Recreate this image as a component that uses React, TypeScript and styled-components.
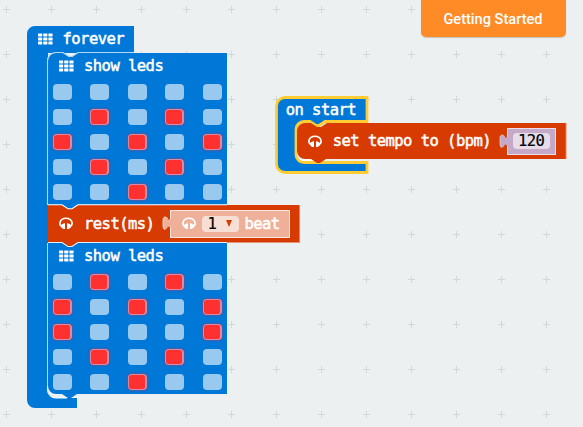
import React from "react";
import styled, { createGlobalStyle } from "styled-components";

const BLUE = "#0078d7";
const RED = "#d83b01";
const CANVAS = "#ecf0f1";
const YELLOW = "#fc3";

const GlobalStyle = createGlobalStyle`
  body { margin: 0; background: ${CANVAS}; }
  * { box-sizing: border-box; }
`;

const Workspace = styled.main`
  position: relative;
  width: 583px;
  height: 427px;
  overflow: hidden;
  background: ${CANVAS};
`;

const GridLayer = styled.svg`
  position: absolute;
  inset: 0;
`;

const Stack = styled.section<{ $x: number; $y: number }>`
  position: absolute;
  left: ${(p) => p.$x}px;
  top: ${(p) => p.$y}px;
`;

const Block = styled.div<{ $w: number; $h: number }>`
  position: relative;
  width: ${(p) => p.$w}px;
  height: ${(p) => p.$h}px;
`;

const Silhouette = styled.svg`
  position: absolute;
  inset: 0;
  width: 100%;
  height: 100%;
  overflow: visible;
`;

const Row = styled.div<{ $h: number; $pad: number; $top?: number }>`
  position: relative;
  display: flex;
  align-items: center;
  height: ${(p) => p.$h}px;
  padding-left: ${(p) => p.$pad}px;
  padding-top: ${(p) => p.$top ?? 0}px;
  gap: 10px;
`;

const Label = styled.span<{ $dark?: boolean }>`
  font: 15.5px/18px "DejaVu Sans Mono", monospace;
  letter-spacing: -0.53px;
  color: ${(p) => (p.$dark ? "#000" : "#fff")};
  -webkit-text-stroke: ${(p) => (p.$dark ? "0.2px #000" : "0.5px #fff")};
  white-space: pre;
`;

const Statements = styled.div<{ $indent: number; $top?: number }>`
  position: relative;
  margin-left: ${(p) => p.$indent}px;
  padding-top: ${(p) => p.$top ?? 0}px;
`;

const LedGrid = styled.div`
  position: relative;
  display: grid;
  grid-template-columns: repeat(5, 19px);
  grid-auto-rows: 16px;
  gap: 9px 18.5px;
  padding: 5px 0 0 4.8px;
`;

const Led = styled.i<{ $on: boolean }>`
  border-radius: 4px;
  background: ${(p) => (p.$on ? "#ff3030" : "#99c9ef")};
  border: ${(p) => (p.$on ? "1px solid #d78ca6" : "0")};
  border-right-width: ${(p) => (p.$on ? "2px" : "0")};
  box-shadow: ${(p) => (p.$on ? "0 0 3px #a03a70" : "none")};
`;

const ValueBlock = styled.div<{ $w: number; $h: number; $fill: string; $edge: string; $gap: number; $offset: number; $pad: number }>`
  position: relative;
  display: flex;
  align-items: center;
  gap: ${(p) => p.$gap}px;
  width: ${(p) => p.$w}px;
  height: ${(p) => p.$h}px;
  margin-left: ${(p) => p.$offset}px;
  padding-left: ${(p) => p.$pad}px;
  background: ${(p) => p.$fill};
  border: 1px solid ${(p) => p.$edge};
`;

const Tab = styled.svg`
  position: absolute;
  left: -9px;
  top: 4px;
`;

const Field = styled.div<{ $w: number; $fill: string; $left?: number }>`
  display: flex;
  align-items: center;
  justify-content: ${(p) => (p.$left ? "flex-start" : "center")};
  padding-left: ${(p) => p.$left ?? 0}px;
  gap: 10px;
  width: ${(p) => p.$w}px;
  height: 16px;
  border-radius: 4px;
  background: ${(p) => p.$fill};
`;

const GettingStarted = styled.button`
  position: absolute;
  left: 421px;
  top: 0;
  width: 145px;
  height: 37px;
  padding: 0 1px 0 0;
  border: 0;
  border-radius: 0 0 5px 5px;
  background: #ff8b27;
  box-shadow: 0 1px 1px #c9c4bf;
  color: #fff;
  font: 500 14.6px/38px Roboto, sans-serif;
`;

const GridIcon = () => (
  <svg width="15" height="12" viewBox="0 0 15 12" fill="#fff">
    {[0.4, 4.4, 8.4].map((y) =>
      [0, 5.2, 10.4].map((x) => <rect key={`${x}-${y}`} x={x} y={y} width="4.2" height="3" rx=".4" />),
    )}
  </svg>
);

const Headphones = () => (
  <svg width="15" height="13" viewBox="0 0 15 13">
    <path d="M1.9 9C.2 6.6.9 3.8 3 2.4C5.2.9 8.8.9 11 2.4C13.1 3.8 13.8 6.6 12.1 9" fill="none" stroke="#fff" strokeWidth="1.7" />
    <path d="M6 6.2V12.1C3.6 12 2.2 10.9 1.5 8.9C2.6 7.2 4 6.2 6 6.2ZM8 6.2V12.1C10.4 12 11.8 10.9 12.5 8.9C11.4 7.2 10 6.2 8 6.2Z" fill="#fff" />
  </svg>
);

const Connector = ({ fill, edge }: { fill: string; edge: string }) => (
  <Tab width="10" height="16" viewBox="0 0 10 16">
    <path d="M10 3L6 5Q5 1.5 2.5 2Q1 2.5 1 5V11Q1 14.5 3 14.5Q5 14 6 11.5L10 13Z" fill={fill} />
    <path d="M6 4.5Q5 1.5 2.5 2Q1 2.5 1 5V11Q1 14.5 3 14.5" fill="none" stroke={edge} strokeWidth=".8" />
  </Tab>
);

const ShowLeds = ({ pattern, first }: { pattern: string[]; first?: boolean }) => (
  <Block $w={179} $h={first ? 152 : 151}>
    <Silhouette>
      {first ? (
        <>
          <path d="M0 152V8A8 8 0 0 1 8 0H15L21 4H24L30 0H179V152Z" fill={BLUE} />
          <path d="M-.5 152V8A8 8 0 0 1 7.5-.5H15L21 3.5H24L30-.5H86" fill="none" stroke="#b5d9f4" strokeWidth="1.1" />
        </>
      ) : (
        <>
          <path d="M0 0H179V151H29L23 155H20L14 151H8A8 8 0 0 1 0 143Z" fill={BLUE} />
          <path d="M14-1L20 3H24L30-1Z" fill={RED} />
          <path d="M0-.5H14L20 3.5H24L30-.5H179" fill="none" stroke="#e3effa" strokeWidth="1.1" />
          <path d="M-.5 0V143" fill="none" stroke="#b5d9f4" />
        </>
      )}
    </Silhouette>
    <Row $h={26} $pad={11}>
      <GridIcon />
      <Label>show leds</Label>
    </Row>
    <LedGrid>
      {pattern.join("").split("").map((c, i) => (
        <Led key={i} $on={c === "#"} />
      ))}
    </LedGrid>
  </Block>
);

const C_SHAPE = "M10 1.5H92V25.5H50L44 29.5H41L35 25.5H29A8 8 0 0 0 21 33.5V58.5A8 8 0 0 0 29 66.5H92V76.5H10A8.5 8.5 0 0 1 1.5 68V10A8.5 8.5 0 0 1 10 1.5Z";

const OnStart = () => (
  <Block $w={94} $h={78}>
    <Silhouette>
      <path d={C_SHAPE} fill={BLUE} stroke={YELLOW} strokeWidth="2.8" />
    </Silhouette>
    <Row $h={27} $pad={11} $top={2}>
      <Label>on start</Label>
    </Row>
    <Statements $indent={22}>
      <Block $w={270} $h={36}>
        <Silhouette>
          <path d="M0 26V30A8 8 0 0 0 8 38H24L14 34Z" fill="#fff" />
          <path d="M0 8A8 8 0 0 1 8 0H14L20 4H24L30 0H269V36H29L23 40H20L14 36H8A8 8 0 0 1 0 28Z" fill={RED} />
          <path d="M269.2 0V36" stroke="#e8a38c" />
        </Silhouette>
        <Row $h={36} $pad={11} $top={1}>
          <Headphones />
          <Label>set tempo to (bpm)</Label>
          <ValueBlock $w={49} $h={27} $fill="#c5a9c8" $edge="#eadfea" $gap={0} $offset={5.5} $pad={5}>
            <Connector fill="#c5a9c8" edge="#dfc7d8" />
            <Field $w={37} $fill="#e7dce8">
              <Label $dark>120</Label>
            </Field>
          </ValueBlock>
        </Row>
      </Block>
    </Statements>
  </Block>
);

export default function App() {
  return (
    <Workspace>
      <GlobalStyle />
      <GridLayer width="583" height="427">
        <defs>
          <pattern id="grid" x="-16" y="-13" width="45" height="45" patternUnits="userSpaceOnUse">
            <path d="M19 22.5H26M22.5 19V26" stroke="#d2d7d8" />
          </pattern>
        </defs>
        <rect width="583" height="427" fill="url(#grid)" />
      </GridLayer>

      <Stack $x={27} $y={26}>
        <Block $w={107} $h={382}>
          <Silhouette>
            <path d="M0 8A8 8 0 0 1 8 0H107V27H21V364A8 8 0 0 0 29 372H50V382H8A8 8 0 0 1 0 374Z" fill={BLUE} />
            <path d="M21 358V364A8 8 0 0 0 29 372H44L50 368H29Z" fill={CANVAS} />
            <path d="M20.5 358V364A8 8 0 0 0 28.5 372H40" fill="none" stroke="#f8fbfd" />
          </Silhouette>
          <Row $h={26} $pad={10.5}>
            <GridIcon />
            <Label>forever</Label>
          </Row>
          <Statements $indent={21} $top={1}>
            <ShowLeds first pattern={[".....", ".#.#.", "#.#.#", ".#.#.", "..#.."]} />
            <Block $w={252} $h={38}>
              <Silhouette>
                <path d="M0 0H252V37.5H0Z" fill={RED} />
                <path d="M14 0L20 4H24L30 0Z" fill={BLUE} />
                <path d="M0-.2H14L20 3.8H24L30-.2H179" fill="none" stroke="#fff" strokeWidth="1.1" />
                <path d="M251.6 0V37.5" stroke="#e8a38c" strokeWidth=".8" />
              </Silhouette>
              <Row $h={37} $pad={11}>
                <Headphones />
                <Label>rest(ms)</Label>
                <ValueBlock $w={120} $h={28} $fill="#efb09a" $edge="#fae9e2" $gap={5} $offset={6} $pad={11}>
                  <Connector fill="#efb09a" edge="#fae9e2" />
                  <Headphones />
                  <Field $w={37} $fill="#f8dfd6" $left={5}>
                    <Label $dark>1</Label>
                    <svg width="6" height="7" viewBox="0 0 6 7">
                      <path d="M0 0H6L3 7Z" fill={RED} />
                    </svg>
                  </Field>
                  <Label>beat</Label>
                </ValueBlock>
              </Row>
            </Block>
            <ShowLeds pattern={[".#.#.", "#.#.#", "#...#", ".#.#.", "..#.."]} />
          </Statements>
        </Block>
      </Stack>

      <Stack $x={274.7} $y={95.5}>
        <OnStart />
      </Stack>
      <GettingStarted>Getting Started</GettingStarted>
    </Workspace>
  );
}
